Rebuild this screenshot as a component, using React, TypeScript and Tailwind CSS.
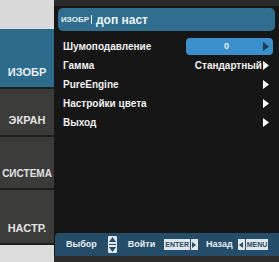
import React from 'react'

const font = { fontFamily: '"Liberation Sans", Arial, sans-serif' }

const tabs = [
    { label: 'ИЗОБР', h: 'h-[60px]', size: 'text-[11px]', active: true },
    { label: 'ЭКРАН', h: 'h-[48px]', size: 'text-[11px]', active: false },
    { label: 'СИСТЕМА', h: 'h-[53px]', size: 'text-[10px]', active: false },
    { label: 'НАСТР.', h: 'h-[55px]', size: 'text-[11px]', active: false },
]

const items = ['Шумоподавление', 'Гамма', 'PureEngine', 'Настройки цвета', 'Выход']

function Arrow({ color = 'text-white' }: { color?: string }) {
    return (
        <svg width="6" height="9" viewBox="0 0 6 9" className={color}>
            <path d="M0 0 L6 4.5 L0 9 Z" fill="currentColor" />
        </svg>
    )
}

export default function App() {
    return (
        <div className="w-[279px] h-[262px] flex bg-[#d9d9d9] overflow-hidden" style={font}>
            {/* left tabs */}
            <div className="w-[54px] flex flex-col">
                <div className="h-[29px] bg-[#dadada]" />
                {tabs.map(t => (
                    <div
                        key={t.label}
                        className={`${t.h} ${t.size} flex items-end justify-center pb-[7px] border-b-2 border-[#1e1e1e] font-bold ${t.active ? 'bg-[#2c6b8c] text-[#e8eef2]' : 'bg-[#3b3b3a] text-[#e2e2e2]'}`}
                    >
                        {t.label}
                    </div>
                ))}
                <div className="flex-1 bg-[#dcdcdc]" />
            </div>

            {/* main panel */}
            <div className="flex-1 flex flex-col bg-[#161616]">
                <div className="h-[6px] bg-[#2a2a2a]" />
                <div className="mx-[4px] mt-[2px] h-[23px] rounded-[5px] bg-[#2f6e8f] flex items-center px-[3px] gap-[2px]">
                    <span className="text-[8px] font-bold text-[#e6eef3]">ИЗОБР</span>
                    <span className="w-px h-[9px] bg-[#e6eef3]" />
                    <span className="text-[12px] font-bold text-[#eef3f6] ml-[2px]">доп наст</span>
                </div>

                <div className="flex-1 flex flex-col pt-[6px] pl-[9px] pr-[6px]">
                    {items.map((it, i) => (
                        <div key={it} className="h-[19px] flex items-center justify-between text-[10px] font-bold text-[#f0f0f0]">
                            <span>{it}</span>
                            {i === 0 ? (
                                <div className="w-[87px] h-[17px] rounded-[4px] bg-[#3b8fcb] flex items-center justify-between pl-[38px] pr-[4px] text-[9px]">
                                    <span>0</span>
                                    <Arrow color="text-[#1d3d57]" />
                                </div>
                            ) : (
                                <div className="flex items-center gap-[1px] mr-[4px]">
                                    {i === 1 && <span>Стандартный</span>}
                                    <Arrow />
                                </div>
                            )}
                        </div>
                    ))}
                </div>

                <div className="ml-[1px] h-[23px] rounded-tl-[4px] bg-[#254d6a] flex items-center pl-[11px] text-[9px] font-bold text-[#e6eef3]">
                    <span>Выбор</span>
                    <div className="ml-[11px] w-[9px] h-[17px] bg-[#e0e6ea] rounded-[1px] flex flex-col items-center justify-between py-[1px]">
                        <svg width="7" height="5" viewBox="0 0 7 5"><path d="M0 5 L3.5 0 L7 5 Z" fill="#254d6a" /></svg>
                        <div className="w-[7px] h-px bg-[#254d6a]" />
                        <svg width="7" height="5" viewBox="0 0 7 5"><path d="M0 0 L3.5 5 L7 0 Z" fill="#254d6a" /></svg>
                    </div>
                    <span className="ml-[11px]">Войти</span>
                    <div className="ml-[9px] flex items-center gap-px">
                        <span className="px-[1px] h-[11px] leading-[11px] bg-[#e0e6ea] text-[#254d6a] text-[7px]">ENTER</span>
                        <span className="w-[7px] h-[11px] bg-[#e0e6ea] flex items-center justify-center">
                            <svg width="4" height="6" viewBox="0 0 4 6"><path d="M0 0 L4 3 L0 6 Z" fill="#254d6a" /></svg>
                        </span>
                    </div>
                    <span className="ml-[8px]">Назад</span>
                    <div className="ml-[5px] flex items-center gap-px">
                        <span className="w-[7px] h-[11px] bg-[#e0e6ea] flex items-center justify-center">
                            <svg width="4" height="6" viewBox="0 0 4 6"><path d="M4 0 L0 3 L4 6 Z" fill="#254d6a" /></svg>
                        </span>
                        <span className="px-[1px] h-[11px] leading-[11px] bg-[#e0e6ea] text-[#254d6a] text-[7px]">MENU</span>
                    </div>
                </div>
                <div className="h-[6px] bg-[#2b2b2b]" />
            </div>
        </div>
    )
}
